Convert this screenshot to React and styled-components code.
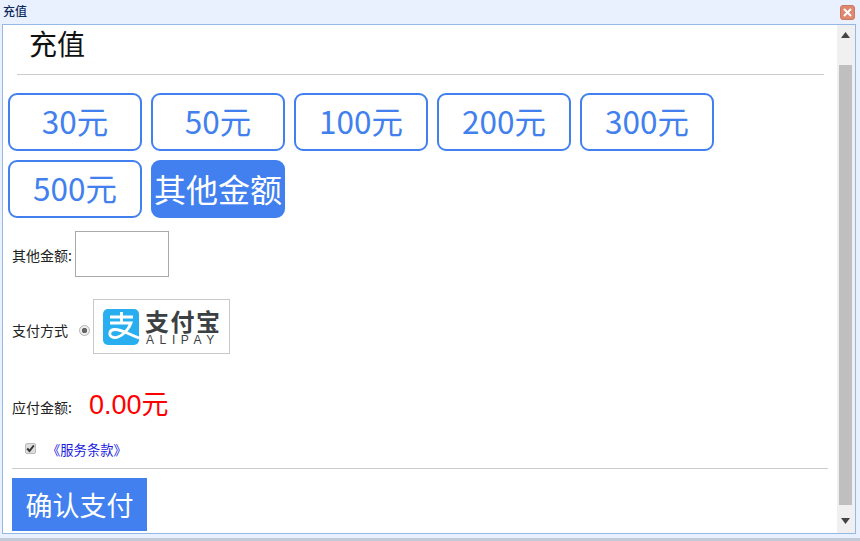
import React from "react";
import styled, { createGlobalStyle } from "styled-components";

const Global = createGlobalStyle`
  html, body { margin: 0; padding: 0; background: #e8f0fd; }
  body { font-family: "Noto Sans CJK SC", "Liberation Sans", sans-serif; }
  * { box-sizing: border-box; }
`;
const Win = styled.div`
  width: 860px; height: 541px; display: flex; flex-direction: column; overflow: hidden;
  background: #e9f1fe; border-bottom: 3px solid #c2cad6;
`;
const TitleBar = styled.div`
  height: 24px; flex: none; display: flex; align-items: center; justify-content: space-between;
  padding: 0 5px 3px 3px;
`;
const Title = styled.div`font-size: 12px; font-weight: 500; color: #0e2a5e; line-height: 16px;`;
const Close = styled.div`
  width: 15px; height: 15px; border-radius: 3px; background: #e0876f; border: 1px solid #c9795f;
  display: flex; align-items: center; justify-content: center; color: #fff; margin-top: 3px;
`;
const Panel = styled.div`
  width: 854px; height: 510px; margin-left: 2px; flex: none; display: flex; background: #fff;
  border: 1px solid #95b8e7;
`;
const Body = styled.div`flex: 1; min-width: 0;`;
const Heading = styled.h2`
  margin: 0; height: 49px; padding: 0 0 9px 26px; font-size: 28px; font-weight: 400; color: #111;
  line-height: 36px;
`;
const Rule = styled.hr`
  border: 0; height: 1px; background: #ccc; margin: 0 ${p => p.$right}px 0 ${p => p.$left}px;
`;
const Amounts = styled.div`
  display: flex; flex-wrap: wrap; gap: 9px; padding: 18px 0 0 5px; width: 780px;
`;
const Amount = styled.button`
  width: 134px; height: 58px; padding: 0 0 3px; border: 2px solid #4180ee; border-radius: 9px;
  font: 400 ${p => (p.$active ? 32 : 31.5)}px/1 "Noto Sans CJK SC", "Liberation Sans", sans-serif; white-space: nowrap;
  color: ${p => (p.$active ? "#fff" : "#4180ee")};
  background: ${p => (p.$active ? "#4180ee" : "#fff")};
`;
const Label = styled.span`
  font-size: 14px; color: #222; line-height: 18px; white-space: nowrap; width: 60px; flex: none;
  margin-top: ${p => p.$drop}px;
`;
const OtherRow = styled.div`
  display: flex; align-items: center; gap: 3px; padding: 13px 0 0 9px; height: 59px;
`;
const AmountInput = styled.input`
  width: 94px; height: 46px; border: 1px solid #a9a9a9; background: #fff; padding: 0;
`;
const PayRow = styled.div`
  display: flex; align-items: center; padding: 22px 0 0 9px; height: 77px;
`;
const Radio = styled.input`
  appearance: none; width: 11px; height: 11px; margin: 7px 3px 0 7px; border-radius: 50%;
  border: 1px solid #b5b5b5; background: radial-gradient(circle, #666 0 2.4px, #eee 3px);
`;
const LogoBox = styled.div`
  width: 137px; height: 55px; border: 1px solid #c8c8c8; display: flex; align-items: center;
  gap: 6px; padding: 0 0 0 9px;
`;
const LogoText = styled.div`display: flex; flex-direction: column; align-items: flex-start;`;
const LogoCn = styled.div`
  font-size: 24px; font-weight: 700; line-height: 25px; letter-spacing: 1.5px; color: #3b4043; white-space: nowrap;
`;
const LogoEn = styled.div`
  font: 400 12px/12px "Liberation Sans", sans-serif; letter-spacing: 5.6px; color: #3b4043; margin: 1px 0 0 1px;
`;
const TotalRow = styled.div`
  display: flex; align-items: center; padding: 40px 0 0 9px; height: 61px;
`;
const Price = styled.span`
  font: 400 27px/32px "Liberation Sans", "Noto Sans CJK SC", sans-serif; color: #f00; margin-left: 17px;
`;
const TermsRow = styled.div`
  display: flex; align-items: center; padding: 0 0 0 22px; height: 31px; margin: 18px 0 4px;
`;
const Check = styled.span`
  width: 11px; height: 11px; border-radius: 2px; background: #ddd; border: 1px solid #bbb;
  display: flex; align-items: center; justify-content: center; margin: 0 11px 0 0;
`;
const Link = styled.a`font-size: 13.3px; color: #1a1ae0; line-height: 16px; margin-top: 2px; white-space: nowrap;`;
const Confirm = styled.button`
  display: block; margin: 9px 0 0 9px; width: 135px; height: 53px; border: 0; padding: 0;
  background: #4180ee; color: #fff; font: 400 27px/1 "Noto Sans CJK SC", sans-serif;
`;
const Scroll = styled.div`
  width: 18px; flex: none; background: #f0f0f0; display: flex; flex-direction: column;
  padding: 0 3px 0 2px;
`;
const Arrow = styled.div`height: 40px; display: flex; padding-top: 7px; justify-content: center; flex: none;`;
const ArrowDown = styled(Arrow)`height: 28px; padding-top: 13px;`;
const Thumb = styled.div`flex: 1; background: #bfbfbf;`;

export default function App() {
  return (
    <Win>
      <Global />
      <TitleBar>
        <Title>充值</Title>
        <Close>
          <svg width="9" height="9" viewBox="0 0 9 9"><path d="M1 1l7 7M8 1L1 8" stroke="#fff" strokeWidth="2" /></svg>
        </Close>
      </TitleBar>
      <Panel>
        <Body>
          <Heading>充值</Heading>
          <Rule $left={14} $right={13} />
          <Amounts>
            {["30元", "50元", "100元", "200元", "300元", "500元"].map(a => <Amount key={a}>{a}</Amount>)}
            <Amount $active>其他金额</Amount>
          </Amounts>
          <OtherRow>
            <Label $drop={2}>其他金额:</Label>
            <AmountInput />
          </OtherRow>
          <PayRow>
            <Label $drop={7}>支付方式</Label>
            <Radio type="radio" defaultChecked />
            <LogoBox>
              <svg width="36" height="36" viewBox="0 0 36 36">
                <rect width="36" height="36" rx="5" fill="#29aef0" />
                <path d="M7 8h23M18.500 3v11M7 14h21C25 22 17 29 11 28.500 5 28 5.500 20.500 12 20.500 18 20.500 26 25 36 29" fill="none" stroke="#fff" strokeWidth="2.800" />
              </svg>
              <LogoText>
                <LogoCn>支付宝</LogoCn>
                <LogoEn>ALIPAY</LogoEn>
              </LogoText>
            </LogoBox>
          </PayRow>
          <TotalRow>
            <Label $drop={4}>应付金额:</Label>
            <Price>0.00元</Price>
          </TotalRow>
          <TermsRow>
            <Check>
              <svg width="9" height="9" viewBox="0 0 9 9"><path d="M1.200 4.500l2.300 2.500 4.300-5.500" fill="none" stroke="#333" strokeWidth="2" /></svg>
            </Check>
            <Link>《服务条款》</Link>
          </TermsRow>
          <Rule $left={9} $right={9} />
          <Confirm>确认支付</Confirm>
        </Body>
        <Scroll>
          <Arrow><svg width="9" height="6" viewBox="0 0 9 6"><path d="M4.500 0L9 6H0z" fill="#444" /></svg></Arrow>
          <Thumb />
          <ArrowDown><svg width="9" height="6" viewBox="0 0 9 6"><path d="M0 0h9L4.500 6z" fill="#444" /></svg></ArrowDown>
        </Scroll>
      </Panel>
    </Win>
  );
}
